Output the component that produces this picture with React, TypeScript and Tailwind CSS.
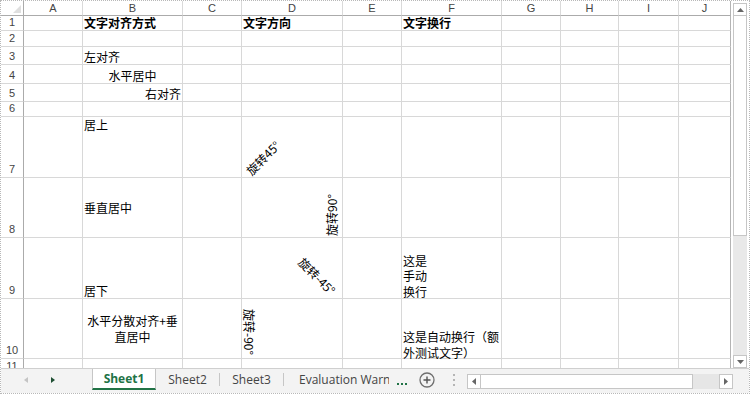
import React from 'react';

const COLS = ['A', 'B', 'C', 'D', 'E', 'F', 'G', 'H', 'I', 'J'];
const ROWS = [1, 2, 3, 4, 5, 6, 7, 8, 9, 10, 11];

const cjk = "font-['Noto_Sans_CJK_SC',sans-serif]";
const ui = "font-['Liberation_Sans',sans-serif]";
const tabFont = "font-['Open_Sans',sans-serif]";

const T: React.FC<{ children: React.ReactNode; bold?: boolean }> = ({ children, bold }) => (
  <span className={`${cjk} whitespace-nowrap text-[12px] leading-[12px] text-black ${bold ? 'font-bold' : ''}`}>
    {children}
  </span>
);

// rotated text, centred on left/top given in className
const Rot: React.FC<{ children: React.ReactNode; className: string }> = ({ children, className }) => (
  <span
    className={`${cjk} absolute -translate-x-1/2 -translate-y-1/2 whitespace-nowrap text-[12px] leading-[12px] text-black ${className}`}
  >
    {children}
  </span>
);

type Cell = { align?: string; node: React.ReactNode };

const cells: Record<string, Cell> = {
  B1: { node: <T bold>文字对齐方式</T> },
  D1: { node: <T bold>文字方向</T> },
  F1: { node: <T bold>文字换行</T> },
  B3: { node: <T>左对齐</T> },
  B4: { align: 'items-end justify-center pb-[1px]', node: <T>水平居中</T> },
  B5: { align: 'items-end justify-end pb-[1px]', node: <T>右对齐</T> },
  B7: { align: 'items-start justify-start pt-[2px]', node: <T>居上</T> },
  B8: { align: 'items-center justify-start', node: <T>垂直居中</T> },
  B9: { node: <T>居下</T> },
  B10: {
    align: 'items-center justify-center',
    node: (
      <div className={`${cjk} text-center text-[12px] leading-[16px] text-black`}>
        水平分散对齐+垂
        <br />
        直居中
      </div>
    ),
  },
  D7: { node: <Rot className="left-[21px] top-[41px] -rotate-45">旋转45°</Rot> },
  D8: { node: <Rot className="left-[90px] top-[37px] -rotate-90">旋转90°</Rot> },
  D9: { node: <Rot className="left-[75px] top-[38px] rotate-45">旋转-45°</Rot> },
  D10: { node: <Rot className="left-[7px] top-[33px] rotate-90">旋转-90°</Rot> },
  F9: {
    align: 'items-end justify-start',
    node: (
      <div className={`${cjk} relative top-[1px] text-[12px] leading-[15.5px] text-black`}>
        这是
        <br />
        手动
        <br />
        换行
      </div>
    ),
  },
  F10: {
    align: 'items-end justify-start',
    node: (
      <div className={`${cjk} relative top-[2px] whitespace-nowrap text-[12px] leading-[15.5px] text-black`}>
        这是自动换行（额
        <br />
        外测试文字）
      </div>
    ),
  },
};

const SheetGrid = () => (
  <div className="grid h-[367px] w-[730px] grid-cols-[23px_59px_100px_59px_101px_59px_100px_59px_58px_60px_52px] grid-rows-[15px_15px_16px_18px_19px_18px_15px_61px_60px_61px_60px_9px] overflow-hidden bg-white">
    {/* corner */}
    <div className="flex items-end justify-end border-r border-b border-[#ababab] pr-[2px] pb-[2px]">
      <svg width="8" height="8" viewBox="0 0 8 8">
        <polygon points="8,0 8,8 0,8" fill="#dfdfdf" />
      </svg>
    </div>
    {COLS.map((c) => (
      <div
        key={c}
        className={`flex items-center justify-center border-b border-b-[#ababab] border-r ${
          c === 'J' ? 'border-r-[#b4b4b4]' : 'border-r-[#dadada]'
        } ${ui} text-[11px] leading-[11px] text-[#444]`}
      >
        {c}
      </div>
    ))}
    {ROWS.map((r) => (
      <React.Fragment key={r}>
        <div
          className={`flex justify-center overflow-hidden border-r border-r-[#ababab] ${
            r === 11 ? 'items-start pt-[2px]' : 'items-end border-b border-b-[#d8d8d8] pb-[2px]'
          } ${ui} text-[11px] leading-[11px] text-[#444]`}
        >
          {r}
        </div>
        {COLS.map((c) => {
          const cell = cells[`${c}${r}`];
          return (
            <div
              key={c}
              className={`relative flex border-r px-[1px] ${c === 'J' ? 'border-r-[#b4b4b4]' : 'border-r-[#d8d8d8]'} ${
                r === 11 ? '' : 'border-b border-b-[#d8d8d8]'
              } ${cell?.align ?? 'items-end justify-start pb-[1px]'}`}
            >
              {cell?.node}
            </div>
          );
        })}
      </React.Fragment>
    ))}
  </div>
);

const VScroll = () => (
  <div className="ml-[2px] flex w-[14px] flex-col pt-[2px]">
    <div className="flex h-[13px] items-center justify-center border border-[#c6c6c6] bg-white">
      <svg width="7" height="4" viewBox="0 0 7 4">
        <polygon points="0,4 3.5,0 7,4" fill="#666" />
      </svg>
    </div>
    <div className="h-[220px] border-x border-b border-[#c6c6c6] bg-white" />
    <div className="flex-1 bg-[#e9e9e9]" />
    <div className="flex h-[13px] items-center justify-center border border-[#c6c6c6] bg-white">
      <svg width="7" height="4" viewBox="0 0 7 4">
        <polygon points="0,0 7,0 3.5,4" fill="#666" />
      </svg>
    </div>
  </div>
);

const HScroll = () => (
  <div className="flex h-[15px] w-[266px]">
    <div className="flex w-[14px] items-center justify-center border border-[#c6c6c6] bg-white">
      <svg width="4" height="7" viewBox="0 0 4 7">
        <polygon points="4,0 4,7 0,3.5" fill="#666" />
      </svg>
    </div>
    <div className="w-[212px] border-y border-r border-[#c6c6c6] bg-white" />
    <div className="flex-1 bg-[#e6e6e6]" />
    <div className="flex w-[14px] items-center justify-center border border-[#c6c6c6] bg-white">
      <svg width="4" height="7" viewBox="0 0 4 7">
        <polygon points="0,0 4,3.5 0,7" fill="#666" />
      </svg>
    </div>
  </div>
);

const TabBar = () => (
  <div className={`flex h-[25px] items-stretch border-t border-[#cfcfcf] bg-[#f3f3f3] pb-[3px] ${tabFont}`}>
    <div className="flex w-[91px] items-center pl-[23px] pt-[1px]">
      <svg width="4" height="6" viewBox="0 0 4 6">
        <polygon points="4,0 4,6 0,3" fill="#c4c4c4" />
      </svg>
      <svg className="ml-[23px]" width="4" height="6" viewBox="0 0 4 6">
        <polygon points="0,0 4,3 0,6" fill="#1f4f33" />
      </svg>
    </div>
    <div className="flex w-[64px] items-center justify-center border-x border-b-2 border-x-[#c6c6c6] border-b-[#217346] bg-white text-[12px] font-bold text-[#217346]">
      Sheet1
    </div>
    <div className="flex w-[63px] items-center justify-center text-[12px] text-[#444]">Sheet2</div>
    <div className="my-[4px] w-px bg-[#c6c6c6]" />
    <div className="flex w-[63px] items-center justify-center text-[12px] text-[#444]">Sheet3</div>
    <div className="my-[4px] w-px bg-[#c6c6c6]" />
    <div className="flex items-center pl-[15px]">
      <span className="w-[90px] overflow-hidden whitespace-nowrap text-[12px] text-[#444]">Evaluation Warning</span>
    </div>
    <div className="ml-[8px] flex items-end pb-[5px] gap-[2px]">
      <span className="h-[2px] w-[2px] bg-[#217346]" />
      <span className="h-[2px] w-[2px] bg-[#217346]" />
      <span className="h-[2px] w-[2px] bg-[#217346]" />
    </div>
    <div className="ml-[12px] flex items-center">
      <svg width="16" height="16" viewBox="0 0 16 16">
        <circle cx="8" cy="8" r="7" fill="none" stroke="#6f6f6f" strokeWidth="1.3" />
        <path d="M8 4.5v7M4.5 8h7" stroke="#555" strokeWidth="1.4" />
      </svg>
    </div>
    <div className="ml-[18px] flex flex-col items-center justify-center gap-[3px]">
      <span className="h-[2px] w-[2px] bg-[#b5b5b5]" />
      <span className="h-[2px] w-[2px] bg-[#b5b5b5]" />
      <span className="h-[2px] w-[2px] bg-[#b5b5b5]" />
    </div>
    <div className="ml-[12px] flex items-center pt-[3px]">
      <HScroll />
    </div>
  </div>
);

export default function App() {
  return (
    <div className="h-[394px] w-[750px] overflow-hidden border border-dotted border-[#b8b8b8] bg-white">
      <div className="flex h-[367px]">
        <SheetGrid />
        <VScroll />
      </div>
      <TabBar />
    </div>
  );
}
